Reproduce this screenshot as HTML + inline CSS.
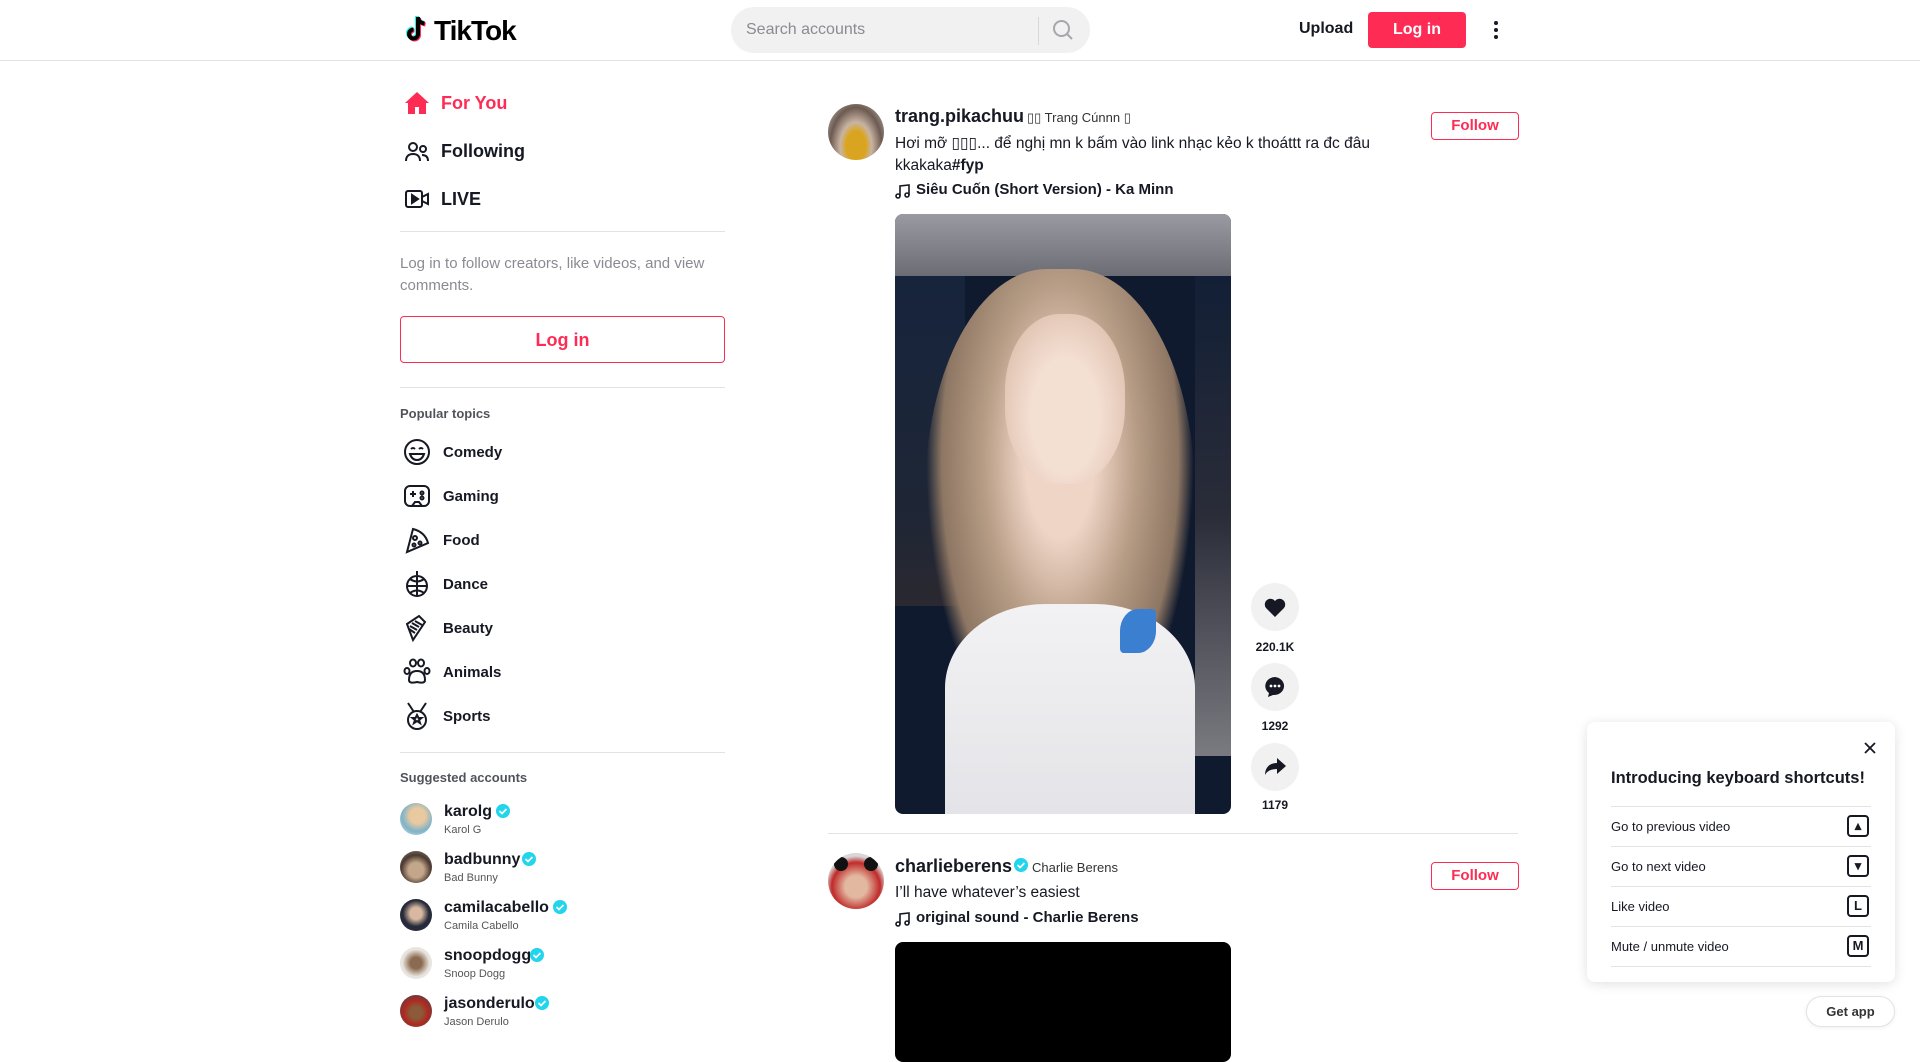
<!DOCTYPE html>
<html><head><meta charset="utf-8"><style>
*{margin:0;padding:0;box-sizing:border-box}
body{width:1920px;height:1040px;overflow:hidden;background:#fff;font-family:"Liberation Sans","Noto Sans CJK SC",sans-serif;color:#161823;position:relative}
.a{position:absolute;white-space:nowrap}
.b{font-weight:bold}
.hr{position:absolute;height:1px;background:#e3e3e4}
.ic{position:absolute}
.av{position:absolute;border-radius:50%;overflow:hidden}
.btn{position:absolute;border:1px solid #fe2c55;color:#fe2c55;border-radius:4px;text-align:center;font-weight:bold}
.act{position:absolute;width:48px;height:48px;border-radius:50%;background:#f1f1f2;left:1251px}
.cnt{position:absolute;left:1251px;width:48px;text-align:center;font-size:12px;font-weight:bold;color:#161823}
.kb{position:absolute;left:1847px;width:22px;height:22px;border:2px solid #161823;border-radius:4px;font-size:13px;font-weight:bold;text-align:center;line-height:18px}
</style></head><body>
<!-- header -->
<div class="hr" style="left:0;top:60px;width:1920px;background:#e3e3e4"></div>
<svg class="ic" style="left:405px;top:15px" width="24" height="28" viewBox="0 0 24 28"><path d="M13 2v17a4.5 4.5 0 1 1-4.5-4.5" fill="none" stroke="#25f4ee" stroke-width="4" transform="translate(-1,-1)"/><path d="M13 2c0 4 3 6 6.5 6.5" fill="none" stroke="#25f4ee" stroke-width="4" transform="translate(-1,-1)"/><path d="M13 2v17a4.5 4.5 0 1 1-4.5-4.5" fill="none" stroke="#fe2c55" stroke-width="4" transform="translate(1,1)"/><path d="M13 2c0 4 3 6 6.5 6.5" fill="none" stroke="#fe2c55" stroke-width="4" transform="translate(1,1)"/><path d="M13 2v17a4.5 4.5 0 1 1-4.5-4.5" fill="none" stroke="#000" stroke-width="4"/><path d="M13 2c0 4 3 6 6.5 6.5" fill="none" stroke="#000" stroke-width="4"/></svg>
<div class="a b" style="left:434px;top:15px;font-size:28px;letter-spacing:-1px;color:#000">TikTok</div>
<div class="a" style="left:731px;top:7px;width:359px;height:46px;border-radius:23px;background:#f1f1f2"></div>
<div class="a" style="left:746px;top:21px;font-size:16px;color:#8a8b91">Search accounts</div>
<div class="a" style="left:1038px;top:17px;width:1px;height:28px;background:#d8d8da"></div>
<svg class="ic" style="left:1052px;top:19px" width="22" height="22" viewBox="0 0 22 22"><circle cx="9.5" cy="9.5" r="7.5" fill="none" stroke="#a7a7ab" stroke-width="2"/><path d="M15 15l5 5" stroke="#a7a7ab" stroke-width="2"/></svg>
<div class="a b" style="left:1299px;top:20px;font-size:16px">Upload</div>
<div class="a b" style="left:1368px;top:12px;width:98px;height:36px;background:#fe2c55;color:#fff;border-radius:4px;text-align:center;line-height:36px;font-size:16px">Log in</div>
<svg class="ic" style="left:1492px;top:19px" width="8" height="22"><circle cx="4" cy="4" r="2" fill="#161823"/><circle cx="4" cy="11" r="2" fill="#161823"/><circle cx="4" cy="18" r="2" fill="#161823"/></svg>

<!-- sidebar -->
<svg class="ic" style="left:404px;top:91px" width="26" height="24" viewBox="0 0 26 24"><path d="M13 1L1 12h3v11h7v-7h4v7h7V12h3z" fill="#fe2c55"/></svg>
<div class="a b" style="left:441px;top:93px;font-size:18px;color:#fe2c55">For You</div>
<svg class="ic" style="left:404px;top:140px" width="26" height="24" viewBox="0 0 26 24" fill="none" stroke="#161823" stroke-width="2"><circle cx="9" cy="7" r="4"/><path d="M2 21c0-5 3-7 7-7s7 2 7 7"/><circle cx="19" cy="9" r="3"/><path d="M18 15c4 0 6 2 6 6"/></svg>
<div class="a b" style="left:441px;top:141px;font-size:18px">Following</div>
<svg class="ic" style="left:404px;top:188px" width="26" height="22" viewBox="0 0 26 22" fill="none" stroke="#161823" stroke-width="2"><rect x="2" y="3" width="16" height="16" rx="2"/><path d="M18 9l6-3v10l-6-3"/><path d="M8 7v8l6-4z" fill="#161823"/></svg>
<div class="a b" style="left:441px;top:189px;font-size:18px">LIVE</div>
<div class="hr" style="left:400px;top:231px;width:325px"></div>
<div class="a" style="left:400px;top:253px;font-size:15px;color:#8a8b91;line-height:22px;white-space:normal;width:325px">Log in to follow creators, like videos, and view comments.</div>
<div class="btn" style="left:400px;top:316px;width:325px;height:47px;line-height:47px;font-size:18px">Log in</div>
<div class="hr" style="left:400px;top:387px;width:325px"></div>
<div class="a" style="left:400px;top:406px;font-size:13px;font-weight:bold;color:rgba(22,24,35,.75)">Popular topics</div>

<svg class="ic" style="left:403px;top:438px" width="28" height="28" viewBox="0 0 28 28" fill="none" stroke="#161823" stroke-width="2"><circle cx="14" cy="14" r="12"/><path d="M8 11q2-2 4 0M16 11q2-2 4 0M7 16h14q-2 6-7 6t-7-6z"/></svg>
<div class="a b" style="left:443px;top:444px;font-size:15px">Comedy</div>
<svg class="ic" style="left:403px;top:482px" width="28" height="28" viewBox="0 0 28 28" fill="none" stroke="#161823" stroke-width="2"><rect x="2" y="4" width="24" height="20" rx="5"/><path d="M7 12h6M10 9v6"/><circle cx="19" cy="11" r="1.5"/><circle cx="19" cy="16" r="1.5"/><path d="M9 24l3-4h4l3 4"/></svg>
<div class="a b" style="left:443px;top:488px;font-size:15px">Gaming</div>
<svg class="ic" style="left:403px;top:526px" width="28" height="28" viewBox="0 0 28 28" fill="none" stroke="#161823" stroke-width="2"><path d="M4 26L10 3q12 3 15 14z"/><circle cx="12" cy="12" r="2"/><circle cx="11" cy="19" r="1.5"/><circle cx="17" cy="17" r="1.5"/></svg>
<div class="a b" style="left:443px;top:532px;font-size:15px">Food</div>
<svg class="ic" style="left:403px;top:570px" width="28" height="28" viewBox="0 0 28 28" fill="none" stroke="#161823" stroke-width="2"><circle cx="14" cy="16" r="10"/><path d="M4 16h20M14 6v20M7 9q7 5 14 0M7 23q7-5 14 0"/><path d="M14 1v4"/></svg>
<div class="a b" style="left:443px;top:576px;font-size:15px">Dance</div>
<svg class="ic" style="left:403px;top:614px" width="28" height="28" viewBox="0 0 28 28" fill="none" stroke="#161823" stroke-width="2"><path d="M4 10L16 2l6 6-12 18z"/><path d="M7 12l7 4M9 9l7 4M12 7l7 4M6 15l6 4"/></svg>
<div class="a b" style="left:443px;top:620px;font-size:15px">Beauty</div>
<svg class="ic" style="left:403px;top:658px" width="28" height="28" viewBox="0 0 28 28" fill="none" stroke="#161823" stroke-width="2"><ellipse cx="10" cy="5" rx="3" ry="3.5"/><ellipse cx="18" cy="5" rx="3" ry="3.5"/><ellipse cx="4" cy="13" rx="2.5" ry="3"/><ellipse cx="24" cy="13" rx="2.5" ry="3"/><path d="M14 13q-8 0-8 9 0 4 8 2 8 2 8-2 0-9-8-9z"/></svg>
<div class="a b" style="left:443px;top:664px;font-size:15px">Animals</div>
<svg class="ic" style="left:403px;top:702px" width="28" height="28" viewBox="0 0 28 28" fill="none" stroke="#161823" stroke-width="2"><path d="M5 1l6 9M23 1l-6 9"/><circle cx="14" cy="18" r="9"/><path d="M14 13l1.5 3h3l-2.5 2 1 3-3-2-3 2 1-3-2.5-2h3z"/></svg>
<div class="a b" style="left:443px;top:708px;font-size:15px">Sports</div>
<div class="hr" style="left:400px;top:752px;width:325px"></div>
<div class="a" style="left:400px;top:770px;font-size:13px;font-weight:bold;color:rgba(22,24,35,.75)">Suggested accounts</div>

<div class="av" style="left:400px;top:803px;width:32px;height:32px;background:radial-gradient(circle at 55% 40%,#e8c9a0 30%,#7fb3c8 60%,#d7e2e6)"></div>
<div class="a b" style="left:444px;top:803px;font-size:16px">karolg</div>
<svg class="ic" style="left:496px;top:804px" width="14" height="14"><circle cx="7" cy="7" r="7" fill="#20d5ec"/><path d="M3.5 7l2.5 2.5 4.5-4.5" stroke="#fff" stroke-width="1.8" fill="none"/></svg>
<div class="a" style="left:444px;top:824px;font-size:11px;color:#555">Karol G</div>

<div class="av" style="left:400px;top:851px;width:32px;height:32px;background:radial-gradient(circle at 50% 60%,#c4a78a 30%,#4b3a30 60%,#8a8a8a)"></div>
<div class="a b" style="left:444px;top:851px;font-size:16px">badbunny</div>
<svg class="ic" style="left:522px;top:852px" width="14" height="14"><circle cx="7" cy="7" r="7" fill="#20d5ec"/><path d="M3.5 7l2.5 2.5 4.5-4.5" stroke="#fff" stroke-width="1.8" fill="none"/></svg>
<div class="a" style="left:444px;top:872px;font-size:11px;color:#555">Bad Bunny</div>

<div class="av" style="left:400px;top:899px;width:32px;height:32px;background:radial-gradient(circle at 50% 45%,#d8b8a0 25%,#262a3a 55%)"></div>
<div class="a b" style="left:444px;top:899px;font-size:16px">camilacabello</div>
<svg class="ic" style="left:553px;top:900px" width="14" height="14"><circle cx="7" cy="7" r="7" fill="#20d5ec"/><path d="M3.5 7l2.5 2.5 4.5-4.5" stroke="#fff" stroke-width="1.8" fill="none"/></svg>
<div class="a" style="left:444px;top:920px;font-size:11px;color:#555">Camila Cabello</div>

<div class="av" style="left:400px;top:947px;width:32px;height:32px;background:radial-gradient(circle at 50% 50%,#8a6a50 25%,#e9e4df 60%)"></div>
<div class="a b" style="left:444px;top:947px;font-size:16px">snoopdogg</div>
<svg class="ic" style="left:530px;top:948px" width="14" height="14"><circle cx="7" cy="7" r="7" fill="#20d5ec"/><path d="M3.5 7l2.5 2.5 4.5-4.5" stroke="#fff" stroke-width="1.8" fill="none"/></svg>
<div class="a" style="left:444px;top:968px;font-size:11px;color:#555">Snoop Dogg</div>

<div class="av" style="left:400px;top:995px;width:32px;height:32px;background:radial-gradient(circle at 50% 55%,#8a5a3a 25%,#b02a20 50%,#2e4a5a)"></div>
<div class="a b" style="left:444px;top:995px;font-size:16px">jasonderulo</div>
<svg class="ic" style="left:535px;top:996px" width="14" height="14"><circle cx="7" cy="7" r="7" fill="#20d5ec"/><path d="M3.5 7l2.5 2.5 4.5-4.5" stroke="#fff" stroke-width="1.8" fill="none"/></svg>
<div class="a" style="left:444px;top:1016px;font-size:11px;color:#555">Jason Derulo</div>

<!-- post 1 -->
<div class="av" style="left:828px;top:104px;width:56px;height:56px;background:radial-gradient(ellipse at 50% 75%,#d9a520 25%,#c8b4a4 40%,#6d5a50 65%,#ccc)"></div>
<div class="a b" style="left:895px;top:106px;font-size:18px">trang.pikachuu</div>
<div class="a" style="left:1027px;top:110px;font-size:13px;color:#333">▯▯ Trang Cúnnn ▯</div>
<div class="btn" style="left:1431px;top:112px;width:88px;height:28px;line-height:26px;font-size:15px">Follow</div>
<div class="a" style="left:895px;top:133px;font-size:15.5px;line-height:22px">Hơi mỡ ▯▯▯... để nghị mn k bấm vào link nhạc kẻo k thoáttt ra đc đâu</div>
<div class="a" style="left:895px;top:155px;font-size:15.5px;line-height:22px">kkakaka<b>#fyp</b></div>
<svg class="ic" style="left:895px;top:183px" width="16" height="16" viewBox="0 0 16 16" fill="none" stroke="#161823" stroke-width="1.6"><path d="M5 13V3l9-1v10"/><circle cx="3" cy="13" r="2"/><circle cx="12" cy="12" r="2"/></svg>
<div class="a" style="left:916px;top:181px;font-size:15px;font-weight:bold">Siêu Cuốn (Short Version) - Ka Minn</div>
<div class="a" style="left:895px;top:214px;width:336px;height:600px;border-radius:8px;overflow:hidden;background:#101a2e">
 <div style="position:absolute;left:0;top:0;width:336px;height:62px;background:linear-gradient(#9a9aa2,#6c6c74)"></div>
 <div style="position:absolute;left:0;top:62px;width:70px;height:330px;background:linear-gradient(#16243c,#1e2636 70%,#2a2830)"></div>
 <div style="position:absolute;left:300px;top:62px;width:36px;height:480px;background:linear-gradient(#121f36,#2a2c38 50%,#7a7a80)"></div>
 <div style="position:absolute;left:30px;top:55px;width:270px;height:500px;border-radius:45% 45% 35% 35%;background:radial-gradient(ellipse at 50% 38%,#efd5c6 18%,#b79d86 40%,#8d7663 62%,transparent 70%)"></div>
 <div style="position:absolute;left:110px;top:100px;width:120px;height:170px;border-radius:45%;background:radial-gradient(ellipse at 50% 60%,#f4dfd3 40%,#ddbfac 85%)"></div>
 <div style="position:absolute;left:50px;top:390px;width:250px;height:210px;border-radius:40% 40% 0 0;background:linear-gradient(#f2f2f4,#e4e4e8)"></div>
 <div style="position:absolute;left:225px;top:395px;width:36px;height:44px;background:#3b7fd0;border-radius:50% 10% 50% 10%"></div>
</div>
<div class="act" style="top:583px"></div>
<svg class="ic" style="left:1263px;top:596px" width="24" height="22" viewBox="0 0 24 22"><path d="M12 21L3 12a5.5 5.5 0 0 1 9-7 5.5 5.5 0 0 1 9 7z" fill="#161823"/></svg>
<div class="cnt" style="top:640px">220.1K</div>
<div class="act" style="top:663px"></div>
<svg class="ic" style="left:1263px;top:675px" width="24" height="24" viewBox="0 0 24 24"><path d="M12 2a10 9 0 0 0-6 16l-1 4 5-2a10 9 0 1 0 2-18z" fill="#161823"/><circle cx="8" cy="11" r="1.4" fill="#fff"/><circle cx="12" cy="11" r="1.4" fill="#fff"/><circle cx="16" cy="11" r="1.4" fill="#fff"/></svg>
<div class="cnt" style="top:719px">1292</div>
<div class="act" style="top:743px"></div>
<svg class="ic" style="left:1263px;top:756px" width="24" height="22" viewBox="0 0 24 22"><path d="M14 2l9 8-9 8v-5c-6 0-10 2-12 6 0-7 4-12 12-12z" fill="#161823"/></svg>
<div class="cnt" style="top:798px">1179</div>
<div class="hr" style="left:828px;top:833px;width:690px"></div>

<!-- post 2 -->
<div class="av" style="left:828px;top:853px;width:56px;height:56px;background:radial-gradient(circle at 50% 60%,#e2b8a0 25%,#c02a2a 55%,#d8d8d8 70%)"><div style="position:absolute;left:6px;top:4px;width:14px;height:14px;border-radius:50%;background:#111"></div><div style="position:absolute;left:36px;top:4px;width:14px;height:14px;border-radius:50%;background:#111"></div></div>
<div class="a b" style="left:895px;top:856px;font-size:18px">charlieberens</div>
<svg class="ic" style="left:1014px;top:858px" width="14" height="14"><circle cx="7" cy="7" r="7" fill="#20d5ec"/><path d="M3.5 7l2.5 2.5 4.5-4.5" stroke="#fff" stroke-width="1.8" fill="none"/></svg>
<div class="a" style="left:1032px;top:860px;font-size:13px;color:#333">Charlie Berens</div>
<div class="btn" style="left:1431px;top:862px;width:88px;height:28px;line-height:26px;font-size:15px">Follow</div>
<div class="a" style="left:895px;top:882px;font-size:15.5px;line-height:22px">I’ll have whatever’s easiest</div>
<svg class="ic" style="left:895px;top:911px" width="16" height="16" viewBox="0 0 16 16" fill="none" stroke="#161823" stroke-width="1.6"><path d="M5 13V3l9-1v10"/><circle cx="3" cy="13" r="2"/><circle cx="12" cy="12" r="2"/></svg>
<div class="a" style="left:916px;top:909px;font-size:15px;font-weight:bold">original sound - Charlie Berens</div>
<div class="a" style="left:895px;top:942px;width:336px;height:120px;border-radius:8px;background:#000"></div>

<!-- keyboard popup -->
<div class="a" style="left:1587px;top:722px;width:308px;height:260px;border-radius:8px;background:#fff;box-shadow:0 2px 12px rgba(0,0,0,.12)"></div>
<svg class="ic" style="left:1864px;top:742px" width="12" height="12"><path d="M1 1l10 10M11 1L1 11" stroke="#161823" stroke-width="1.8"/></svg>
<div class="a b" style="left:1611px;top:769px;font-size:16.5px">Introducing keyboard shortcuts!</div>
<div class="hr" style="left:1611px;top:806px;width:260px"></div>
<div class="a" style="left:1611px;top:819px;font-size:13px">Go to previous video</div>
<div class="kb" style="top:815px">▴</div>
<div class="hr" style="left:1611px;top:846px;width:260px"></div>
<div class="a" style="left:1611px;top:859px;font-size:13px">Go to next video</div>
<div class="kb" style="top:855px">▾</div>
<div class="hr" style="left:1611px;top:886px;width:260px"></div>
<div class="a" style="left:1611px;top:899px;font-size:13px">Like video</div>
<div class="kb" style="top:895px">L</div>
<div class="hr" style="left:1611px;top:926px;width:260px"></div>
<div class="a" style="left:1611px;top:939px;font-size:13px">Mute / unmute video</div>
<div class="kb" style="top:935px">M</div>
<div class="hr" style="left:1611px;top:966px;width:260px"></div>
<div class="a b" style="left:1806px;top:996px;width:89px;height:31px;border-radius:16px;border:1px solid #e3e3e4;background:#fff;text-align:center;line-height:29px;font-size:13px;color:#333;box-shadow:0 1px 4px rgba(0,0,0,.06)">Get app</div>
</body></html>
